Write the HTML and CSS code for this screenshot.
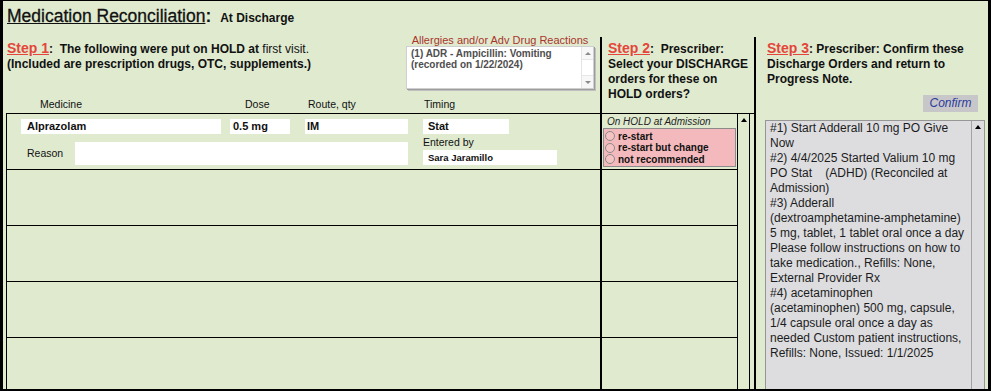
FILE: index.html
```html
<!DOCTYPE html>
<html>
<head>
<meta charset="utf-8">
<title>Medication Reconciliation</title>
<link rel="stylesheet" href="styles.css">
</head>
<body>
<div class="page">
  <div class="title-row">
    <span class="title">Medication Reconciliation</span><span class="title-colon">:</span>&nbsp; <span class="subtitle">At Discharge</span>
  </div>
  <div class="main">
    <div class="step1-head">
      <div class="step1-top">
        <div class="step-text">
          <span class="step">Step 1</span>:&nbsp; The following were put on HOLD at <span class="normal">first visit.</span><br>
          (Included are prescription drugs, OTC, supplements.)
        </div>
        <div class="allergy">
          <div class="allergy-label">Allergies and/or Adv Drug Reactions</div>
          <div class="allergy-box">
            <div class="allergy-text">(1) ADR - Ampicillin: Vomiting<br>(recorded on 1/22/2024)</div>
            <div class="mini-scroll">
              <div class="mini-btn"><span class="mini-tri up"></span></div>
              <div class="mini-track"></div>
              <div class="mini-btn"><span class="mini-tri down"></span></div>
            </div>
          </div>
        </div>
      </div>
      <div class="col-labels">
        <span class="lbl-med">Medicine</span>
        <span class="lbl-dose">Dose</span>
        <span class="lbl-route">Route, qty</span>
        <span class="lbl-timing">Timing</span>
      </div>
    </div>

    <div class="vline vline-a"></div>

    <div class="step2-head step-text">
      <span class="step">Step 2</span>:&nbsp; Prescriber:<br>
      Select your DISCHARGE<br>
      orders for these on<br>
      HOLD orders?
    </div>

    <div class="vline vline-b"></div>

    <div class="step3">
      <div class="step3-text step-text">
        <span class="step">Step 3</span>: Prescriber: Confirm these<br>
        Discharge Orders and return to<br>
        Progress Note.
      </div>
      <div class="confirm">Confirm</div>
      <div class="listbox">
        <div class="list-text">
          <div>#1) Start Adderall 10 mg PO Give Now</div>
          <div>#2) 4/4/2025 Started Valium 10 mg PO Stat &nbsp;&nbsp; (ADHD) (Reconciled at Admission)</div>
          <div>#3) Adderall <span class="nowrap">(dextroamphetamine-amphetamine)</span> 5 mg, tablet, 1 tablet oral once a day Please follow instructions on how to take medication., Refills: None, External Provider Rx</div>
          <div>#4) acetaminophen (acetaminophen) 500 mg, capsule, 1/4 capsule oral once a day as needed Custom patient instructions, Refills: None, Issued: 1/1/2025</div>
        </div>
        <div class="list-scroll"><span class="tri"></span></div>
      </div>
    </div>

    <div class="med-rows">
      <div class="med-row">
        <div class="entry">
          <div class="field f-med">Alprazolam</div>
          <div class="field f-dose">0.5 mg</div>
          <div class="field f-route">IM</div>
          <div class="field f-timing">Stat</div>
          <div class="reason-lbl">Reason</div>
          <div class="field f-reason"></div>
          <div class="entered-lbl">Entered by</div>
          <div class="field f-entered">Sara Jaramillo</div>
        </div>
      </div>
      <div class="med-row"></div>
      <div class="med-row"></div>
      <div class="med-row"></div>
      <div class="med-row"></div>
    </div>

    <div class="hold-rows">
      <div class="hold-row">
        <div class="hold-label">On HOLD at Admission</div>
        <div class="hold-box">
          <div class="radio-row"><span class="radio"></span>re-start</div>
          <div class="radio-row"><span class="radio"></span>re-start but change</div>
          <div class="radio-row"><span class="radio"></span>not recommended</div>
        </div>
      </div>
      <div class="hold-row"></div>
      <div class="hold-row"></div>
      <div class="hold-row"></div>
      <div class="hold-row"></div>
    </div>

    <div class="scroll-col">
      <div class="scrollbar"><span class="tri"></span></div>
    </div>
  </div>
</div>
</body>
</html>
```

FILE: styles.css
```css
* { box-sizing: border-box; }

html, body {
  margin: 0;
  padding: 0;
}

body {
  font-family: "Liberation Sans", Arial, sans-serif;
  color: #111;
  background: #dfeacf;
}

.page {
  width: 991px;
  height: 391px;
  border-style: solid;
  border-color: #000;
  border-width: 1px 3px 2px 3px;
  background: #dfeacf;
  display: flex;
  flex-direction: column;
  overflow: hidden;
}

/* title */
.title-row {
  height: 32px;
  padding: 5px 0 0 4px;
  line-height: 20px;
  white-space: nowrap;
}
.title {
  font-size: 17.5px;
  text-decoration: underline;
  text-underline-offset: 1px;
  -webkit-text-stroke: 0.3px #111;
}
.title-colon {
  font-size: 17.5px;
  font-weight: bold;
}
.subtitle {
  font-size: 12px;
  font-weight: bold;
}

/* main grid */
.main {
  flex: 1;
  display: grid;
  grid-template-columns: 597px 2px 135px 17px 2px 232px;
  grid-template-rows: 80px 276px;
}

.vline {
  background: #000;
  margin-top: 4px;
  grid-row: 1 / 3;
}
.vline-a { grid-column: 2; }
.vline-b { grid-column: 5; }

.step-text {
  font-size: 12px;
  font-weight: bold;
  line-height: 15px;
  white-space: nowrap;
}
.step {
  color: #e5453a;
  font-size: 14px;
  text-decoration: underline;
}
.normal { font-weight: normal; }

/* step 1 header */
.step1-head {
  grid-column: 1;
  grid-row: 1;
  display: flex;
  flex-direction: column;
}
.step1-top {
  display: flex;
  justify-content: space-between;
  align-items: flex-start;
}
.step1-top .step-text {
  padding: 8px 0 0 4px;
}

.allergy {
  width: 188px;
  margin: 1px 6px 0 0;
}
.allergy-label {
  text-align: center;
  font-size: 11px;
  line-height: 12px;
  color: #a9352b;
  white-space: nowrap;
}
.allergy-box {
  height: 43px;
  background: #fff;
  border: 1px solid #cfcfcf;
  box-shadow: 1px 1px 0 #9c9c9c, 2px 2px 0 #c0c0c0;
  display: flex;
}
.allergy-text {
  flex: 1;
  padding: 1px 0 0 4px;
  font-size: 10px;
  font-weight: bold;
  line-height: 11px;
  color: #4e4e4e;
  white-space: nowrap;
}
.mini-scroll {
  width: 12px;
  border-left: 1px solid #e4e4e4;
  display: flex;
  flex-direction: column;
}
.mini-btn {
  height: 12px;
  display: flex;
  align-items: center;
  justify-content: center;
  background: #f7f7f7;
}
.mini-track {
  flex: 1;
  border-top: 1px solid #e6e6e6;
  border-bottom: 1px solid #e6e6e6;
}
.mini-tri {
  width: 0;
  height: 0;
  border-left: 3px solid transparent;
  border-right: 3px solid transparent;
}
.mini-tri.up { border-bottom: 3px solid #8a8a8a; }
.mini-tri.down { border-top: 3px solid #8a8a8a; }

.col-labels {
  margin-top: auto;
  margin-bottom: 3px;
  padding-left: 37px;
  display: flex;
  font-size: 10.5px;
  line-height: 12px;
  white-space: nowrap;
}
.lbl-med { width: 205px; }
.lbl-dose { width: 63px; }
.lbl-route { width: 116px; }

/* step 2 header */
.step2-head {
  grid-column: 3 / 5;
  grid-row: 1;
  padding: 8px 0 0 6px;
}

/* step 3 */
.step3 {
  grid-column: 6;
  grid-row: 1 / 3;
  display: flex;
  flex-direction: column;
  min-height: 0;
}
.step3-text {
  padding: 8px 0 0 11px;
}
.confirm {
  align-self: flex-end;
  margin: 8px 10px 0 0;
  width: 55px;
  height: 17px;
  line-height: 17px;
  background: #c7c7c9;
  color: #2b3a9c;
  font-size: 12px;
  font-style: italic;
  text-align: center;
}
.listbox {
  flex: 1;
  min-height: 0;
  margin: 8px 3px 0 9px;
  background: #dddde0;
  border: 1px solid #969696;
  border-bottom: none;
  display: flex;
  overflow: hidden;
}
.list-text {
  flex: 1;
  padding: 0 5.5px 0 4px;
  font-size: 12px;
  line-height: 15px;
  color: #1c1c1c;
}
.nowrap { white-space: nowrap; }
.list-scroll {
  width: 13px;
  flex-shrink: 0;
  border-left: 1px solid #a2a2a2;
  display: flex;
  justify-content: center;
  padding-top: 4px;
}
.tri {
  display: block;
  width: 0;
  height: 0;
  border-left: 3.5px solid transparent;
  border-right: 3.5px solid transparent;
  border-bottom: 4px solid #000;
}

/* step 1 rows */
.med-rows {
  grid-column: 1;
  grid-row: 2;
  margin-left: 3px;
  border-left: 1px solid #000;
  overflow: hidden;
}
.med-row {
  height: 56px;
  border-top: 1px solid #000;
  flex-shrink: 0;
}
.entry {
  display: grid;
  grid-template-columns: 54px 146px 69px 118px 149px;
  grid-template-rows: 15px 16px 15px;
  padding: 5px 0 0 14px;
}
.field {
  background: #fff;
  font-size: 11px;
  font-weight: bold;
  line-height: 15px;
  white-space: nowrap;
}
.f-med { grid-column: 1 / 3; grid-row: 1; padding-left: 6px; }
.f-dose { grid-column: 3; grid-row: 1; margin-left: 9px; padding-left: 3px; }
.f-route { grid-column: 4; grid-row: 1; margin-left: 15px; padding-left: 2px; }
.f-timing { grid-column: 5; grid-row: 1; margin-left: 15px; width: 86px; padding-left: 5px; }
.reason-lbl {
  grid-column: 1;
  grid-row: 2 / 4;
  align-self: end;
  line-height: 23px;
  font-size: 10.5px;
  padding-left: 6px;
}
.f-reason {
  grid-column: 2 / 5;
  grid-row: 2 / 4;
  align-self: end;
  height: 23px;
}
.entered-lbl {
  grid-column: 5;
  grid-row: 2;
  margin-left: 15px;
  font-size: 10.5px;
  line-height: 16px;
}
.f-entered {
  grid-column: 5;
  grid-row: 3;
  margin-left: 15px;
  padding-left: 5px;
  font-size: 9.5px;
}

/* step 2 rows */
.hold-rows {
  grid-column: 3;
  grid-row: 2;
  overflow: hidden;
}
.hold-row {
  height: 56px;
  border-top: 1px solid #000;
}
.hold-label {
  margin-top: 2px;
  padding-left: 5px;
  font-size: 10px;
  font-style: italic;
  line-height: 12px;
  color: #1e1e1e;
  white-space: nowrap;
}
.hold-box {
  margin: 0 1px;
  background: #f4b9bc;
  border: 1px solid #8b8b8b;
  padding: 1.5px 0 1px 1px;
}
.radio-row {
  display: flex;
  align-items: center;
  gap: 3px;
  height: 11.5px;
  font-size: 10px;
  font-weight: bold;
  white-space: nowrap;
}
.radio {
  width: 10px;
  height: 10px;
  border-radius: 50%;
  border: 1px solid #8a8a8a;
  background: #f6c3c5;
  flex-shrink: 0;
}

/* scrollbar column */
.scroll-col {
  grid-column: 4;
  grid-row: 2;
  border-top: 1px solid #000;
}
.scrollbar {
  width: 13px;
  height: 100%;
  border-left: 1px solid #000;
  border-right: 1px solid #000;
  display: flex;
  justify-content: center;
  padding-top: 4px;
}
```
